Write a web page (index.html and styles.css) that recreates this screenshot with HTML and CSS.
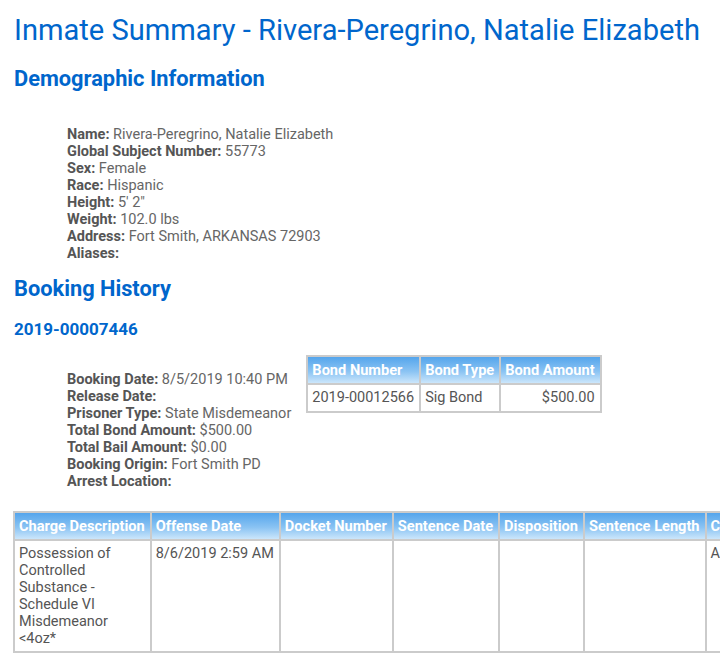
FILE: index.html
```html
<!DOCTYPE html>
<html lang="en">
<head>
<meta charset="utf-8">
<title>Inmate Summary</title>
<link rel="stylesheet" href="styles.css">
</head>
<body>
<h1 class="title">Inmate Summary - Rivera-Peregrino, Natalie Elizabeth</h1>

<h2 class="section">Demographic Information</h2>
<ul class="details demo">
  <li><b>Name:</b> Rivera-Peregrino, Natalie Elizabeth</li>
  <li><b>Global Subject Number:</b> 55773</li>
  <li><b>Sex:</b> Female</li>
  <li><b>Race:</b> Hispanic</li>
  <li><b>Height:</b> 5' 2"</li>
  <li><b>Weight:</b> 102.0 lbs</li>
  <li><b>Address:</b> Fort Smith, ARKANSAS 72903</li>
  <li><b>Aliases:</b></li>
</ul>

<h2 class="section booking-title">Booking History</h2>
<h3 class="booking-no">2019-00007446</h3>

<div class="booking-row">
  <ul class="details booking">
    <li><b>Booking Date:</b> 8/5/2019 10:40 PM</li>
    <li><b>Release Date:</b></li>
    <li><b>Prisoner Type:</b> State Misdemeanor</li>
    <li><b>Total Bond Amount:</b> $500.00</li>
    <li><b>Total Bail Amount:</b> $0.00</li>
    <li><b>Booking Origin:</b> Fort Smith PD</li>
    <li><b>Arrest Location:</b></li>
  </ul>
  <table class="grid bonds">
    <thead>
      <tr><th>Bond Number</th><th>Bond Type</th><th>Bond Amount</th></tr>
    </thead>
    <tbody>
      <tr><td class="nowrap">2019-00012566</td><td class="nowrap">Sig Bond</td><td class="num">$500.00</td></tr>
    </tbody>
  </table>
</div>

<table class="grid charges">
  <thead>
    <tr>
      <th>Charge Description</th>
      <th>Offense Date</th>
      <th>Docket Number</th>
      <th>Sentence Date</th>
      <th>Disposition</th>
      <th>Sentence Length</th>
      <th>Charge Status</th>
    </tr>
  </thead>
  <tbody>
    <tr>
      <td>Possession of Controlled Substance - Schedule VI Misdemeanor &lt;4oz*</td>
      <td class="nowrap">8/6/2019 2:59 AM</td>
      <td></td>
      <td></td>
      <td></td>
      <td></td>
      <td class="nowrap">Active</td>
    </tr>
  </tbody>
</table>
</body>
</html>
```

FILE: styles.css
```css
html {
  overflow: hidden;
}

body {
  margin: 0;
  padding: 0 14px;
  font-family: Roboto, "Liberation Sans", sans-serif;
  font-size: 14.5px;
  color: #555;
  background: #fff;
}

.title {
  margin: 13px 0 20px;
  font-size: 29.1px;
  line-height: 34px;
  font-weight: 400;
  color: #0066cc;
  white-space: nowrap;
}

.section {
  margin: 0;
  font-size: 21.8px;
  line-height: 24px;
  font-weight: 700;
  color: #0066cc;
}

.details {
  list-style: none;
  margin: 0;
  padding: 0 0 0 53px;
  line-height: 17px;
  color: #666;
}

.details b {
  color: #555;
  font-weight: 700;
}

.demo {
  margin-top: 35px;
}

.booking-title {
  margin-top: 15px;
}

.booking-no {
  margin: 18px 0 0;
  font-size: 17px;
  line-height: 20px;
  font-weight: 700;
  color: #0066cc;
}

.booking-row {
  display: flex;
  align-items: flex-start;
  gap: 15px;
  margin-top: 16px;
}

.booking {
  padding-top: 16px;
  white-space: nowrap;
}

.grid {
  border-collapse: separate;
  border-spacing: 2px;
  background: #cbcbcb;
  flex: none;
}

.grid th {
  padding: 4px 5px 4px 4px;
  font-size: 14.6px;
  line-height: 18px;
  font-weight: 700;
  color: #fff;
  text-align: left;
  white-space: nowrap;
  background: linear-gradient(to bottom, #54a5ec 0%, #8ac3f3 55%, #cbe6fb 100%);
}

.grid td {
  padding: 4px 5px 4px 4px;
  line-height: 18px;
  vertical-align: top;
  background: #fff;
  color: #555;
}

.grid td.num {
  text-align: right;
}

.grid td.nowrap {
  white-space: nowrap;
}

.charges {
  margin-top: 21px;
  margin-left: -1px;
}

.charges td {
  line-height: 17px;
}
```
